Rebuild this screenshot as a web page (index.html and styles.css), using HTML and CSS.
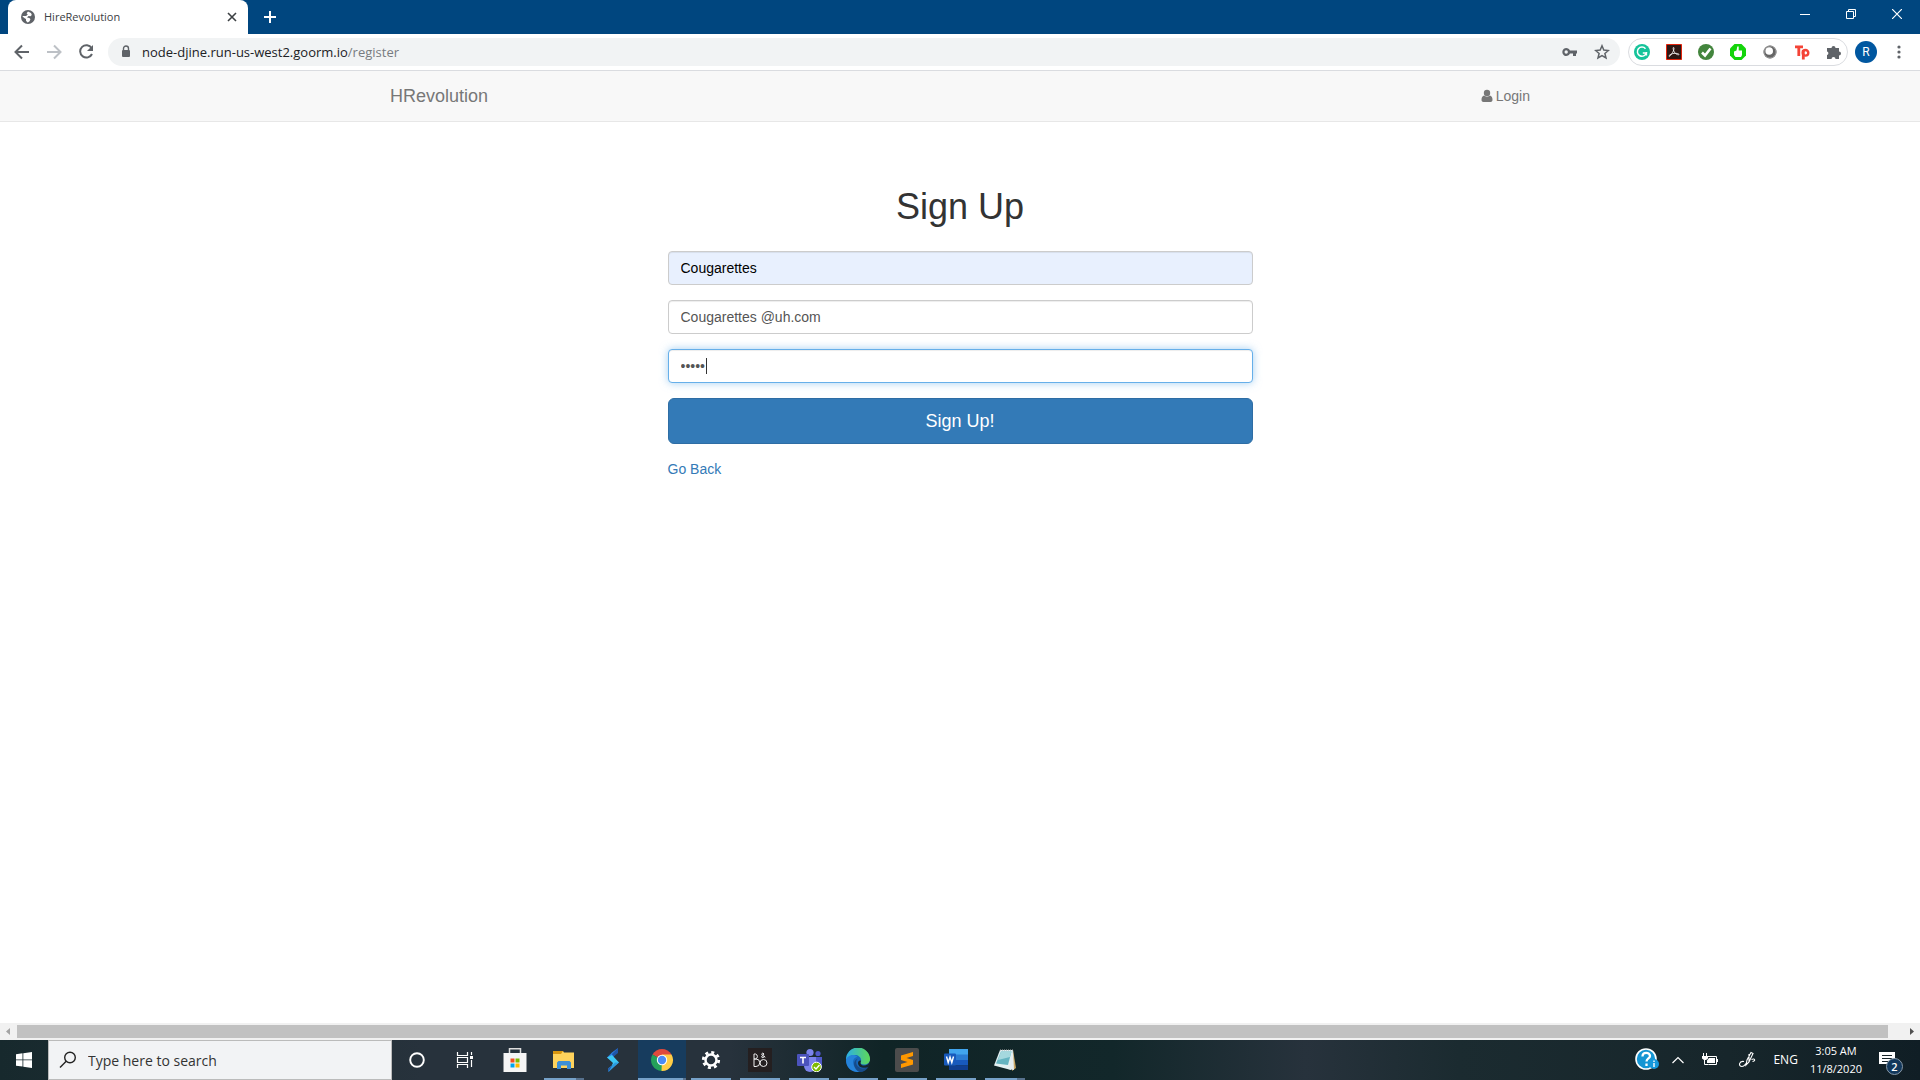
FILE: index.html
```html
<!DOCTYPE html>
<html lang="en">
<head>
    <meta charset="UTF-8">
    <meta name="viewport" content="width=device-width, initial-scale=1.0">
    <title>HireRevolution</title>
    <link rel="stylesheet" href="styles.css">
</head>
<body>
    <header class="browser">
        <div class="tab-strip">
            <div class="tab">
                <svg class="tab-icon" viewBox="0 0 14 14"><circle cx="7" cy="7" r="7" fill="#5f6368"/><path d="M7 1.4 5.6 3.2 6.8 4.5 5 6H2L1.4 6.5 4 8.5l1 .5v1.8l1.5 1.6C9 12 8.8 10 9.5 9.3L8.4 8 6 7.6 7.5 6l2 .2 1.3-1.2L10 3z" fill="#fff"/></svg>
                <span class="tab-title">HireRevolution</span>
                <button class="tab-close" aria-label="Close tab"><svg width="10" height="10" viewBox="0 0 10 10"><path d="M1 1l8 8M9 1L1 9" stroke="#3c4043" stroke-width="1.6"/></svg></button>
            </div>
            <button class="new-tab" aria-label="New tab"><svg width="12" height="12" viewBox="0 0 12 12"><path d="M6 0v12M0 6h12" stroke="#fff" stroke-width="2"/></svg></button>
            <div class="window-buttons">
                <button aria-label="Minimize"><svg width="10" height="10" viewBox="0 0 10 10"><path d="M0 5.5h10" stroke="#fff"/></svg></button>
                <button aria-label="Restore"><svg width="10" height="10" viewBox="0 0 10 10"><path d="M.5 2.5h7v7h-7zM2.5 2.5v-2h7v7h-2" fill="none" stroke="#fff"/></svg></button>
                <button aria-label="Close"><svg width="10" height="10" viewBox="0 0 10 10"><path d="M0 0l10 10M10 0L0 10" stroke="#fff" stroke-width="1.2"/></svg></button>
            </div>
        </div>
        <div class="toolbar">
            <div class="nav-buttons">
                <button aria-label="Back"><svg width="16" height="16" viewBox="0 0 16 16"><path d="M15 8H2M8 1.5L1.5 8 8 14.5" fill="none" stroke="#5f6368" stroke-width="2"/></svg></button>
                <button aria-label="Forward"><svg width="16" height="16" viewBox="0 0 16 16"><path d="M1 8h13M8 1.5L14.5 8 8 14.5" fill="none" stroke="#bdc1c6" stroke-width="2"/></svg></button>
                <button aria-label="Reload"><svg width="16" height="16" viewBox="0 0 16 16"><path d="M13.6 4A6.2 6.2 0 1 0 14 10" fill="none" stroke="#5f6368" stroke-width="2"/><path d="M15 1v6H9z" fill="#5f6368"/></svg></button>
            </div>
            <div class="address-bar">
                <svg width="10" height="14" viewBox="0 0 10 14"><path d="M2.5 5V3.5a2.5 2.5 0 0 1 5 0V5" fill="none" stroke="#5f6368" stroke-width="1.4"/><rect x="1" y="5" width="8" height="7" rx="1" fill="#5f6368"/></svg>
                <span class="url"><span class="host">node-djine.run-us-west2.goorm.io</span>/register</span>
                <svg class="key" width="16" height="16" viewBox="0 0 16 16"><path fill="#5f6368" fill-rule="evenodd" d="M8 6.500a4 4 0 1 0 0 3h3V12h3V9.500h1v-3zM4.200 9.700a1.700 1.700 0 1 1 0-3.400 1.700 1.700 0 0 1 0 3.400z"/></svg>
                <svg width="16" height="16" viewBox="0 0 16 16"><path d="M8 1.800l1.800 4.300 4.600.4-3.500 3 1.100 4.500L8 11.600 4 14l1.100-4.500-3.500-3 4.600-.4z" fill="none" stroke="#5f6368" stroke-width="1.500"/></svg>
            </div>
            <div class="extensions">
                <svg width="16" height="16" viewBox="0 0 16 16"><circle cx="8" cy="8" r="8" fill="#15c39a"/><path d="M11.5 4.7A4.6 4.6 0 1 0 12.4 9H8.800M12.4 8v3.500" fill="none" stroke="#fff" stroke-width="1.5"/></svg>
                <svg width="16" height="16" viewBox="0 0 16 16"><path d="M.5.5h15v15H.5z" fill="#2d1714" stroke="#e2230b"/><path d="M7.5 3.500c1.200 0 0 3.500-1 5.200S3.500 13 3 12.200 5.500 9.600 8 9.400s5 .1 5 1-2.600.2-4-1.400S6.500 3.500 7.500 3.500z" fill="none" stroke="#fff" stroke-width=".8"/></svg>
                <svg width="16" height="16" viewBox="0 0 16 16"><circle cx="8" cy="8" r="8" fill="#43853d"/><path d="M4 8.500l3 3 5.500-7" fill="none" stroke="#fff" stroke-width="2.600"/></svg>
                <svg width="16" height="16" viewBox="0 0 16 16"><path d="M4.500 0h7L16 4.500v7L11.500 16h-7L0 11.500v-7z" fill="#14d40b"/><path d="M4 7.500l2.500-1L7.300 2.500h1.400V6.500H12V11l-1 2H5.500L4 11z" fill="#fff"/></svg>
                <svg width="16" height="16" viewBox="0 0 16 16"><circle cx="8" cy="8" r="6.500" fill="#666"/><circle cx="8" cy="8" r="6" fill="none" stroke="#999"/><circle cx="7.200" cy="7" r="3.800" fill="#fff"/></svg>
                <svg width="16" height="16" viewBox="0 0 16 16"><path d="M1 2.800h8M4.800 2.800V12M9.300 6v9.500" fill="none" stroke="#f44336" stroke-width="2.800"/><circle cx="11.500" cy="8.800" r="2.800" fill="none" stroke="#f44336" stroke-width="2.400"/></svg>
                <svg width="16" height="16" viewBox="0 0 16 16"><path d="M1 4h4.500a2 2 0 1 1 4 0H13v3.500a2 2 0 1 1 0 4V15H9.500a2 2 0 0 0-4 0H1v-4a1.800 1.800 0 0 0 0-3.500z" fill="#5f6368"/></svg>
            </div>
            <button class="profile">R</button>
            <button class="menu" aria-label="Menu"><svg width="4" height="14" viewBox="0 0 4 14"><g fill="#5f6368"><circle cx="2" cy="2" r="1.6"/><circle cx="2" cy="7" r="1.6"/><circle cx="2" cy="12" r="1.6"/></g></svg></button>
        </div>
    </header>

    <div class="page">
        <nav class="navbar">
            <div class="container">
                <a class="navbar-brand" href="#">HRevolution</a>
                <a class="navbar-link" href="#"><svg width="12" height="14" viewBox="0 0 12 14"><circle cx="6" cy="4" r="3.2" fill="#777"/><path d="M3 6.5c-2 .5-2.500 2.500-2.500 4.500 0 1.300.8 2 2 2h7c1.200 0 2-.7 2-2 0-2-.5-4-2.500-4.500C7.500 8 4.500 8 3 6.500z" fill="#777"/></svg> Login</a>
            </div>
        </nav>
        <main class="container">
            <h1>Sign Up</h1>
            <form class="signup-form" action="">
                <input class="form-control autofilled" type="text" name="username" aria-label="Username" value="Cougarettes">
                <input class="form-control" type="text" name="email" aria-label="Email" value="Cougarettes @uh.com">
                <div class="form-control focused">
                    <input class="password" type="password" name="password" aria-label="Password" value="12345" size="5">
                    <span class="caret"></span>
                </div>
                <button class="btn-primary">Sign Up!</button>
                <a class="back-link" href="#">Go Back</a>
            </form>
        </main>
    </div>

    <div class="scrollbar">
        <svg width="17" height="17" viewBox="0 0 17 17"><path d="M10 5v7L6 8.5z" fill="#a3a3a3"/></svg>
        <div class="scroll-thumb"></div>
        <svg width="17" height="17" viewBox="0 0 17 17"><path d="M7 5v7l4-3.5z" fill="#505050"/></svg>
    </div>

    <footer class="taskbar">
        <button class="start" aria-label="Start"><svg width="16" height="16" viewBox="0 0 16 16"><path d="M0 2.2l6.500-.9v6.200H0zM7.300 1.200L16 0v7.500H7.300zM0 8.300h6.500v6.300L0 13.700zM7.300 8.300H16V16l-8.700-1.200z" fill="#fff"/></svg></button>
        <label class="search">
            <svg width="18" height="18" viewBox="0 0 18 18"><circle cx="11" cy="6.5" r="5.3" fill="none" stroke="#222" stroke-width="1.4"/><path d="M7.2 10.3L1 16.5" stroke="#222" stroke-width="1.4"/></svg>
            <input type="text" placeholder="Type here to search" aria-label="Search">
        </label>
        <div class="apps">
            <button class="app" aria-label="Cortana"><svg width="24" height="24" viewBox="0 0 24 24"><circle cx="12" cy="12" r="6.8" fill="none" stroke="#fff" stroke-width="1.9"/></svg></button>
            <button class="app" aria-label="Task View"><svg width="24" height="24" viewBox="0 0 24 24"><path d="M3.500 4v3.500h10V4M3.500 20v-3.500h10V20M3.500 9.500h10v5h-10zM17.500 4v3M17.500 12v7" fill="none" stroke="#fff" stroke-width="1.200"/><path d="M16 8h3v3h-3z" fill="#fff"/></svg></button>
            <button class="app" aria-label="Store"><svg width="24" height="24" viewBox="0 0 24 24"><path d="M6.500 6V.8h11V6" fill="none" stroke="#ddd" stroke-width="1.500"/><path d="M.5 5h23v19H.5z" fill="#f5f5f5"/><path d="M7.500 10.500h4v4h-4z" fill="#f25022"/><path d="M12.500 10.500h4v4h-4z" fill="#7fba00"/><path d="M7.500 15.500h4v4h-4z" fill="#00a4ef"/><path d="M12.500 15.500h4v4h-4z" fill="#ffb900"/></svg></button>
            <button class="app open stacked" aria-label="File Explorer"><svg width="24" height="24" viewBox="0 0 24 24"><path d="M1 3h10l1 1.500h10V20H1z" fill="#ffd35c"/><path d="M1 3h10l-2 3H1z" fill="#d9960f"/><path d="M5 21v-6.500L6.500 13h11l1.500 1.500V21h-4v-3.500H9V21z" fill="#3d8fd6"/></svg></button>
            <button class="app" aria-label="Stylus"><svg width="24" height="24" viewBox="0 0 24 24"><path d="M17 0L11 4.500 6 9.500l5 2.500 3-6z" fill="#2c80e8"/><path d="M17 0v5l-5 4-1-3z" fill="#1f55a8"/><path d="M6 9.500l5-2.500 7 7.500L12 19l-1-2 1-2z" fill="#3cc8f5"/><path d="M18 14.500L7.500 24l-.5-3.500 5-4 2-2z" fill="#2d9be0"/><path d="M7.500 24l-.5-3.500 4-3z" fill="#2458a8"/></svg></button>
            <button class="app open active stacked" aria-label="Chrome"><svg width="24" height="24" viewBox="0 0 24 24"><path d="M12 12L2.500 6.500A11 11 0 0 1 21.500 6.500z" fill="#df4a3d"/><path d="M12 12L2.500 6.500A11 11 0 0 0 11.500 23L16 14z" fill="#24a15a"/><path d="M12 12L11.500 23A11 11 0 0 0 21.500 6.500H12z" fill="#ffcd46"/><circle cx="12" cy="12" r="5.200" fill="#fff"/><circle cx="12" cy="12" r="4.200" fill="#4b8bf5"/></svg></button>
            <button class="app open" aria-label="Settings"><svg width="24" height="24" viewBox="0 0 24 24"><circle cx="12" cy="12" r="5.5" fill="none" stroke="#fff" stroke-width="2.5"/><circle cx="12" cy="12" r="7.7" fill="none" stroke="#fff" stroke-width="2.8" stroke-dasharray="3 3.048"/></svg></button>
            <button class="app open" aria-label="Bang &amp; Olufsen"><svg width="24" height="24" viewBox="0 0 24 24"><path d="M0 0h24v24H0z" fill="#241f20"/><g fill="none" stroke="#eee"><path d="M6 6v12.500M6 6h1.500a2.600 2.600 0 0 1 0 5H6h2a3.700 3.700 0 0 1 0 7.500H6"/><circle cx="15.500" cy="15" r="3.500"/><path d="M17 9.500L13.500 6q1.500-2 2.500 0L13.500 9q1 2 3.500-1"/></g></svg></button>
            <button class="app open" aria-label="Teams"><svg width="26" height="24" viewBox="0 0 26 24"><circle cx="14" cy="4.500" r="3.600" fill="#7b83eb"/><circle cx="22" cy="5.500" r="2.600" fill="#5059c9"/><path d="M18 9h8v7a4 4 0 0 1-8 3z" fill="#5059c9"/><path d="M8 9h12v9a6 6 0 0 1-12 0z" fill="#7b83eb"/><rect x="1" y="6" width="12" height="12" rx="1" fill="#4b53bc"/><path d="M4 9.500h6M7 9.500v6" stroke="#fff" stroke-width="1.600"/><circle cx="20.500" cy="19" r="4.800" fill="#7fba00" stroke="#fff"/><path d="M18 19l2 2 3.500-4" fill="none" stroke="#fff" stroke-width="1.300"/></svg></button>
            <button class="app open" aria-label="Edge"><svg width="24" height="24" viewBox="0 0 24 24"><defs><linearGradient id="edge-top"><stop offset="0" stop-color="#2baee6"/><stop offset="1" stop-color="#5fda56"/></linearGradient></defs><circle cx="12" cy="12" r="12" fill="#1769bd"/><path d="M0 12A12 12 0 0 1 24 11c0 4-3 5.500-6 5.500-3.500 0-4-1.500-3-3C16 9 11.500 6.500 8 7c-5 .5-7 3-8 5z" fill="url(#edge-top)"/><path d="M0 12c1-4 8-7 11.500-3C7 9 5 16 10 20l3 4C5 24.500 0 19 0 12z" fill="#2583da"/><path d="M12 10.500c-4 3-1 10 5 10 3 0 4-1 5.500-1.500-2 3-5 5-8.500 5-7-2-8-12-2-13.500z" fill="#174b89"/><path d="M15 13c-1 2-.5 4.500 3 4.500 2.500 0 5-1.500 6-4.500v3l-2 3c-4 2-10 .5-10-4 0-2 2-3 3-2z" fill="#17272e"/></svg></button>
            <button class="app open" aria-label="Sublime Text"><svg width="24" height="24" viewBox="0 0 24 24"><rect width="24" height="24" rx="2" fill="#4c4c4c"/><path d="M18 4v4l-6.500 2L18 12v4.500L6 20v-4l6.500-2L6 12V7.500z" fill="#ff9800"/></svg></button>
            <button class="app open" aria-label="Word"><svg width="24" height="24" viewBox="0 0 24 24"><path d="M5 1h19v6H5z" fill="#41a5ee"/><path d="M5 6.500h19V12H5z" fill="#2b7cd3"/><path d="M5 12h19v5.500H5z" fill="#185abd"/><path d="M5 17.500h19V22H5z" fill="#103f91"/><rect y="5.500" width="12" height="12" rx="1" fill="#185abd"/><path d="M2.500 8.500l1.700 6L6 9l1.800 5.500 1.700-6" fill="none" stroke="#fff" stroke-width="1.400"/></svg></button>
            <button class="app open stacked" aria-label="Notepad"><svg width="24" height="24" viewBox="0 0 24 24"><path d="M20 2l3 18-4 3z" fill="#c9a561"/><path d="M7 2h13l-2 20L1 17.500z" fill="#e3f0f2"/><path d="M8 3.500h10.500L15 17 3 15.500z" fill="#65b4c1"/><path d="M8 3.500h10.500L17 9 5 12z" fill="#a5d8de"/><path d="M7 2h13" stroke="#aaa" stroke-dasharray="1 1"/><path d="M20 2l1 20-6-1z" fill="#e5edef"/></svg></button>
        </div>
        <div class="tray">
            <svg width="24" height="24" viewBox="0 0 24 24"><circle cx="11" cy="11" r="10" fill="#1595d3" stroke="#fff" stroke-width="1.600"/><path d="M7.500 8.500c0-5 7.500-4.500 7.500-.5 0 2.500-3.500 2.500-3.500 5.500M11.500 15.500V18" fill="none" stroke="#fff" stroke-width="2.300"/><circle cx="19" cy="16" r="5" fill="#1698dc"/><path d="M19 12.500V14M19 15v4" stroke="#fff" stroke-width="1.400"/></svg>
            <svg width="14" height="14" viewBox="0 0 14 14"><path d="M1.500 10L7 4.500l5.500 5.500" fill="none" stroke="#fff" stroke-width="1.200"/></svg>
            <svg class="tray-icon" width="18" height="16" viewBox="0 0 18 16"><path d="M5.500 4.500h10v8h-8M16.500 7v3M2.500 1v3M5.500 1v3M3.500 8v4.500h4" fill="none" stroke="#fff"/><path d="M1 4h6v2.500L5 8H3L1 6.500zM8 6h6v5H6V8.500z" fill="#fff"/></svg>
            <svg class="tray-icon" width="18" height="18" viewBox="0 0 18 18"><path d="M5 10.500c-5-1-6 5-2 5 3 0 3-3 5-3.500M7 14l1-5 4-7.500 2 1L10 11zM12.500 8.500c4-2 4 2 1 2M10 3v8" fill="none" stroke="#fff" stroke-width="1.100"/></svg>
            <span class="language">ENG</span>
            <span class="clock">3:05 AM<br>11/8/2020</span>
            <span class="notifications">
                <svg width="16" height="16" viewBox="0 0 16 16"><path d="M0 0h16v12h-5l-3 4v-4H0z" fill="#fff"/><path d="M3 3.500h10M3 6.500h10M3 9.500h7" stroke="#172429"/></svg>
                <span class="badge">2</span>
            </span>
        </div>
    </footer>
</body>
</html>
```
FILE: styles.css
```css
* {
    box-sizing: border-box;
}

body {
    display: flex;
    flex-direction: column;
    min-height: 100vh;
    margin: 0;
    background: #fff;
    font-family: "Liberation Sans", Arial, sans-serif;
    font-size: 14px;
    line-height: 20px;
    color: #333;
}

button {
    display: flex;
    align-items: center;
    justify-content: center;
    padding: 0;
    border: 0;
    background: none;
    cursor: pointer;
}

a {
    text-decoration: none;
}

svg {
    flex: none;
}

/* browser */

.browser,
.taskbar {
    font-family: "Open Sans", "Noto Sans", sans-serif;
}

.tab-strip {
    display: flex;
    height: 34px;
    background: #00467f;
}

.tab {
    display: flex;
    align-items: center;
    width: 240px;
    margin-left: 8px;
    padding: 0 11px 0 13px;
    border-radius: 8px 8px 0 0;
    background: #fff;
}

.tab-icon {
    width: 14px;
    height: 14px;
}

.tab-title {
    flex: 1;
    margin-left: 9px;
    font-size: 11px;
    color: #3c4043;
}

.new-tab {
    width: 44px;
}

.window-buttons {
    display: flex;
    height: 28px;
    margin-left: auto;
}

.window-buttons button {
    width: 46px;
}

.toolbar {
    display: flex;
    align-items: center;
    height: 37px;
    padding-right: 19px;
    border-bottom: 1px solid #dadce0;
}

.nav-buttons {
    display: flex;
    gap: 16px;
    padding: 0 14px;
}

.address-bar {
    display: flex;
    flex: 1;
    align-items: center;
    height: 28px;
    padding: 0 10px 0 13px;
    border-radius: 14px;
    background: #f1f3f4;
}

.url {
    flex: 1;
    margin-left: 11px;
    font-size: 13px;
    color: #777b80;
}

.host {
    color: #202124;
}

.key {
    margin-right: 16px;
}

.extensions {
    display: flex;
    gap: 16px;
    margin: 0 7px 0 8px;
    padding: 5px;
    border: 1px solid #dadce0;
    border-radius: 14px;
}

.profile {
    width: 22px;
    height: 22px;
    border-radius: 50%;
    background: #0057a0;
    color: #fff;
    font-family: Roboto, sans-serif;
    font-size: 12px;
}

.menu {
    margin-left: 20px;
}

/* page */

.page {
    flex: 1;
}

.container {
    width: 1170px;
    max-width: 100%;
    margin: 0 auto;
    padding: 0 15px;
}

.navbar {
    border-bottom: 1px solid #e7e7e7;
    background: #f8f8f8;
}

.navbar .container {
    display: flex;
    align-items: center;
    justify-content: space-between;
    height: 50px;
}

.navbar-brand {
    font-size: 18px;
    color: #777;
}

.navbar-link {
    display: flex;
    align-items: center;
    gap: 3px;
    color: #777;
}

h1 {
    margin: 65px 0 24px;
    font-size: 36px;
    font-weight: 500;
    line-height: 40px;
    text-align: center;
}

.signup-form {
    display: flex;
    flex-direction: column;
    gap: 15px;
    width: 585px;
    max-width: 100%;
    margin: 0 auto;
}

.form-control {
    display: flex;
    align-items: center;
    height: 34px;
    padding: 6px 12px;
    border: 1px solid #ccc;
    border-radius: 4px;
    outline: 0;
    background: #fff;
    box-shadow: inset 0 1px 1px rgba(0, 0, 0, .075);
    font-family: inherit;
    font-size: 14px;
    color: #555;
}

.autofilled {
    background: #e8f0fe;
    color: #000;
}

.focused {
    border-color: #66afe9;
    box-shadow: inset 0 1px 1px rgba(0, 0, 0, .075), 0 0 8px rgba(102, 175, 233, .6);
}

.password {
    width: 25px;
    padding: 0;
    border: 0;
    outline: 0;
    font-family: inherit;
    font-size: 14px;
    color: #555;
}

.caret {
    width: 1px;
    height: 16px;
    background: #333;
}

.btn-primary {
    height: 46px;
    border: 1px solid #2e6da4;
    border-radius: 6px;
    background: #337ab7;
    color: #fff;
    font-family: inherit;
    font-size: 18px;
}

.back-link {
    align-self: flex-start;
    color: #337ab7;
}

.scrollbar {
    display: flex;
    align-items: center;
    height: 17px;
    background: #f1f1f1;
}

.scroll-thumb {
    flex: 1;
    height: 13px;
    margin-right: 15px;
    background: #c1c1c1;
}

/* taskbar */

.taskbar {
    display: flex;
    height: 40px;
    background: linear-gradient(90deg, #17292d 0, #27323c 22%, #27323c 38%, #102426 46%, #12272a 58%, #27323c 68%, #1b2b30 76%, #17262b 90%, #101e25 100%);
    color: #fff;
}

.start {
    width: 48px;
}

.search {
    display: flex;
    align-items: center;
    gap: 11px;
    width: 344px;
    padding: 0 10px;
    border: 1px solid #bbb;
    background: #f2f3f5;
}

.search input {
    flex: 1;
    min-width: 0;
    padding: 0;
    border: 0;
    outline: 0;
    background: none;
    font-family: inherit;
    font-size: 14px;
}

.search input::placeholder {
    color: #333;
}

.apps {
    display: flex;
    gap: 1px;
    padding-left: 1px;
}

.app {
    position: relative;
    width: 48px;
}

.app.active {
    background: #173c5e;
}

.app.open::after {
    position: absolute;
    bottom: 0;
    left: 4px;
    width: 40px;
    height: 2px;
    background: #76a1c8;
    content: "";
}

.app.stacked::after {
    background: linear-gradient(90deg, #76a1c8 32px, #57718d 32px);
}

.app.active::after {
    left: 0;
    width: 48px;
    background: linear-gradient(90deg, #76a1c8 45px, #57718d 45px);
}

.tray {
    display: flex;
    align-items: center;
    gap: 12px;
    margin-left: auto;
    padding-right: 20px;
}

.tray-icon {
    margin: 0 4px;
}

.language {
    font-size: 12px;
}

.clock {
    font-size: 11px;
    line-height: 18px;
    text-align: center;
}

.notifications {
    position: relative;
    display: flex;
    margin: 0 5px;
}

.badge {
    position: absolute;
    top: 6px;
    left: 7px;
    width: 17px;
    height: 17px;
    border: 1px solid #8798a7;
    border-radius: 50%;
    background: #12385c;
    font-size: 11px;
    font-weight: 600;
    line-height: 15px;
    text-align: center;
}
```
